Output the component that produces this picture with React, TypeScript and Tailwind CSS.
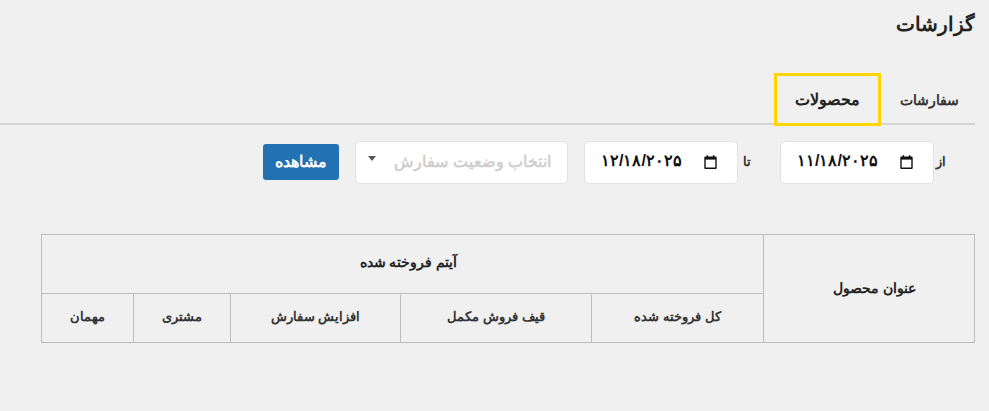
const FONT = "font-['Liberation_Sans',sans-serif]";

function CalendarIcon() {
  return (
    <svg width="13" height="14" viewBox="0 0 13 14" className="shrink-0 -mt-[2px]">
      <path d="M2.6 0.3h1.5V1.6h4.8V0.3h1.5V1.6h1.2A1.1 1.1 0 0 1 12.7 2.7v10.2a1.1 1.1 0 0 1-1.1 1.1H1.4A1.1 1.1 0 0 1 0.3 12.9V2.7A1.1 1.1 0 0 1 1.4 1.6h1.2z" fill="#111" />
      <rect x="1.7" y="4.6" width="9.6" height="7.9" fill="#fff" />
    </svg>
  );
}

function DateField({ value }: { value: string }) {
  return (
    <div dir="ltr" className="w-[154px] h-[43px] flex items-center justify-between pl-[16px] pr-[20px] bg-white border border-[#e2e2e2] rounded-[5px]">
      <span className="text-[16px] text-[#111] font-bold -mt-[4px]">{value}</span>
      <CalendarIcon />
    </div>
  );
}

const HEAD_CELL = "border border-[#bdbdbd] font-bold text-center";
const LABEL = "w-[8px] pt-[11px] text-[13px] leading-[20px] font-bold text-[#333]";

export default function App() {
  return (
    <div dir="rtl" className={`w-[989px] h-[411px] overflow-hidden bg-[#f0f0f0] text-[#222] ${FONT}`}>
      <div className="h-[73px] pr-[14px] pt-[9px]">
        <h1 className="text-[20px] leading-[30px] font-bold text-[#222]">گزارشات</h1>
      </div>

      <div className="mr-[14px] h-[52px] flex border-b-2 border-[#d4d4d4]">
        <div className="w-[94px] pl-[2px] pt-[17px] text-center text-[14px] leading-[20px] font-bold text-[#333]">سفارشات</div>
        <div className="w-[107px] h-[53px] pt-[14px] text-center text-[16px] leading-[20px] font-bold text-[#222] border-[3px] border-[#ffd500]">محصولات</div>
      </div>

      <div className="h-[109px] pt-[16px] pr-[43px] flex items-start">
        <span className={`${LABEL} ml-[4px]`}>از</span>
        <DateField value="۱۱/۱۸/۲۰۲۵" />
        <span className={`${LABEL} mr-[29px] ml-[5px]`}>تا</span>
        <DateField value="۱۲/۱۸/۲۰۲۵" />
        <div className="mr-[16px] w-[213px] h-[43px] flex items-center justify-between pr-[16px] pl-[12px] bg-white border border-[#e2e2e2] rounded-[5px]">
          <span className="text-[15.5px] font-bold text-[#cfcfcf] -mt-[2px]">انتخاب وضعیت سفارش</span>
          <span className="w-0 h-0 -mt-[9px] border-x-[4.5px] border-x-transparent border-t-[5px] border-t-[#555]" />
        </div>
        <button className="mr-[16px] mt-[3px] w-[76px] h-[36px] bg-[#2271b3] rounded-[3px] text-white text-[16px] font-bold">مشاهده</button>
      </div>

      <div className="pl-[41px] pr-[14px]">
        <table className="w-[933px] h-[109px] table-fixed border-collapse">
          <colgroup>
            <col className="w-[211px]" />
            <col className="w-[172px]" />
            <col className="w-[191px]" />
            <col className="w-[170px]" />
            <col className="w-[97px]" />
            <col className="w-[92px]" />
          </colgroup>
          <thead>
            <tr className="h-[59px] text-[14px] text-[#222]">
              <th rowSpan={2} className={`${HEAD_CELL} pl-[11px]`}>عنوان محصول</th>
              <th colSpan={5} className={`${HEAD_CELL} pl-[12px] pb-[3px]`}>آیتم فروخته شده</th>
            </tr>
            <tr className="h-[49px] text-[13px] text-[#333]">
              <th className={`${HEAD_CELL} pb-[3px]`}>کل فروخته شده</th>
              <th className={`${HEAD_CELL} pb-[3px]`}>قیف فروش مکمل</th>
              <th className={`${HEAD_CELL} pb-[3px]`}>افزایش سفارش</th>
              <th className={`${HEAD_CELL} pb-[3px]`}>مشتری</th>
              <th className={`${HEAD_CELL} pb-[3px]`}>مهمان</th>
            </tr>
          </thead>
        </table>
      </div>
    </div>
  );
}
